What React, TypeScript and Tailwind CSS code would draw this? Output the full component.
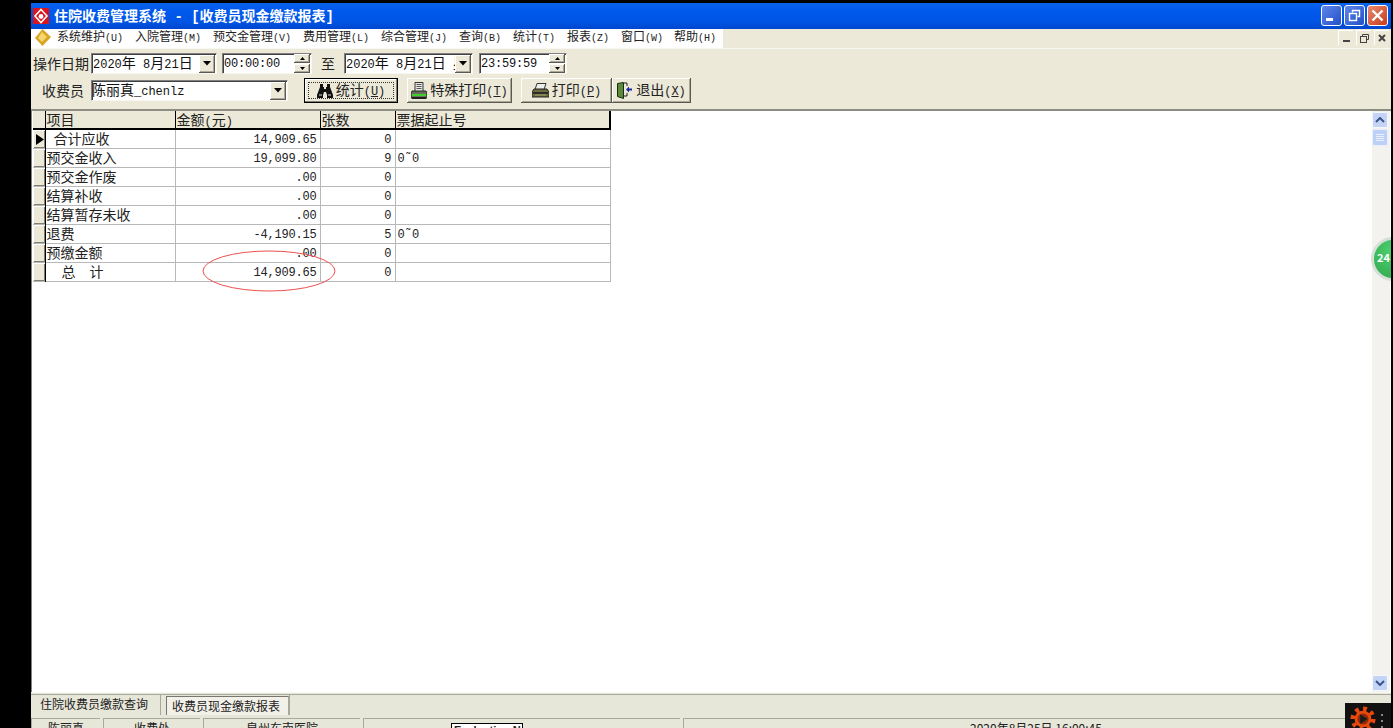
const FONT = "font-['Noto_Sans_CJK_SC','Liberation_Sans',sans-serif]";
const MONO = "font-['Liberation_Mono','Noto_Sans_CJK_SC',monospace]";

const menus = [
  ["系统维护", "(U)", "w-[78px]"],
  ["入院管理", "(M)", "w-[78px]"],
  ["预交金管理", "(V)", "w-[90px]"],
  ["费用管理", "(L)", "w-[78px]"],
  ["综合管理", "(J)", "w-[78px]"],
  ["查询", "(B)", "w-[54px]"],
  ["统计", "(T)", "w-[54px]"],
  ["报表", "(Z)", "w-[54px]"],
  ["窗口", "(W)", "w-[53px]"],
  ["帮助", "(H)", "w-[54px]"],
];

const rows = [
  { name: "合计应收", pad: "pl-[8px]", amount: "14,909.65", count: "0", range: "", mark: true },
  { name: "预交金收入", pad: "pl-[1px]", amount: "19,099.80", count: "9", range: "0˜0" },
  { name: "预交金作废", pad: "pl-[1px]", amount: ".00", count: "0", range: "" },
  { name: "结算补收", pad: "pl-[1px]", amount: ".00", count: "0", range: "" },
  { name: "结算暂存未收", pad: "pl-[1px]", amount: ".00", count: "0", range: "" },
  { name: "退费", pad: "pl-[1px]", amount: "-4,190.15", count: "5", range: "0˜0" },
  { name: "预缴金额", pad: "pl-[1px]", amount: ".00", count: "0", range: "" },
  { name: "总　计", pad: "pl-[16px]", amount: "14,909.65", count: "0", range: "" },
];

const sunken =
  "bg-white border-t border-l border-t-[#808080] border-l-[#808080] border-r border-b border-r-[#f8f8f0] border-b-[#f8f8f0] shadow-[inset_1px_1px_0_#404040]";
const raised =
  "bg-[#ece9d8] shadow-[inset_-1px_-1px_0_#5a5a50,inset_1px_1px_0_#ffffff,inset_-2px_-2px_0_#aca899]";

const Caret = () => (
  <div className={`${raised} w-4 h-[18px] shrink-0 flex items-center justify-center`}>
    <svg width="8" height="5" viewBox="0 0 8 5">
      <path d="M0 0h8L4 4.5z" fill="#000" />
    </svg>
  </div>
);

const Spinner = () => (
  <div className="w-4 h-[19px] shrink-0 flex flex-col gap-px">
    <div className={`${raised} h-[9px] flex items-center justify-center`}>
      <svg width="5" height="3" viewBox="0 0 5 3"><path d="M2.5 0L5 3H0z" fill="#000" /></svg>
    </div>
    <div className={`${raised} h-[9px] flex items-center justify-center`}>
      <svg width="5" height="3" viewBox="0 0 5 3"><path d="M0 0h5L2.5 3z" fill="#000" /></svg>
    </div>
  </div>
);

const DateBox = ({ w, clip }: { w: string; clip?: boolean }) => (
  <div className={`${sunken} ${w} h-[21px] flex items-center pl-px pr-px overflow-hidden`}>
    <span className="flex-1 text-[14px] leading-[18px] whitespace-pre overflow-hidden text-[#111]">
      <span className={`${MONO} text-[12px]`}>2020</span>年<span className={`${MONO} text-[12px]`}> 8</span>月<span className={`${MONO} text-[12px]`}>21</span>日{clip ? <><span className={`${MONO} text-[12px]`}> </span>星</> : null}
    </span>
    <Caret />
  </div>
);

const TimeBox = ({ value, w }: { value: string; w: string }) => (
  <div className={`${sunken} ${w} h-[21px] flex items-center pl-px pr-px`}>
    <span className={`${MONO} flex-1 text-[12px] tracking-[-0.2px] text-[#111]`}>{value}</span>
    <Spinner />
  </div>
);

const Binoculars = () => (
  <svg width="16" height="14" viewBox="0 0 16 14">
    <path d="M3 0h3v3h1v2h2V3h1V0h3v3l3 8v3H10v-3l-1-3H7l-1 3v3H0v-3l3-8z" fill="#111" />
    <path d="M2 10h3v2H2zM11 10h3v2h-3z" fill="#777" />
  </svg>
);

const GreenPrinter = () => (
  <svg width="16" height="18" viewBox="0 0 16 18">
    <path d="M4 .5h8v9H4z" fill="#e8e8e8" stroke="#333" />
    <path d="M5.5 2.5h5M5.5 4.5h5M5.5 6.5h5" stroke="#555" />
    <path d="M1 9h14l1 2v5H0v-5z" fill="#6b6b5e" stroke="#1d2d16" />
    <path d="M1 12h14v2H1z" fill="#3fd02e" />
    <path d="M1 15h14v2H1z" fill="#222" />
  </svg>
);

const GrayPrinter = () => (
  <svg width="17" height="15" viewBox="0 0 17 15">
    <path d="M5 .5h9l-2 6H3z" fill="#eee" stroke="#333" />
    <path d="M2 6h13l2 3v5H0V9z" fill="#6d6d3c" stroke="#222" />
    <path d="M1 9h15v2H1z" fill="#2c2c2c" />
    <path d="M3 12h11" stroke="#9ca06a" />
  </svg>
);

const ExitDoor = () => (
  <svg width="16" height="17" viewBox="0 0 16 17">
    <path d="M.5 1.5l6-1v16l-6-2z" fill="#5d8a3a" stroke="#172c14" />
    <path d="M7 1h3v3M10 11v3H7" stroke="#222" fill="none" />
    <path d="M9 7.5l3-3v2h3v2h-3v2z" fill="#1d2aa0" />
  </svg>
);

const Btn = ({ w, label, hot, icon, focus }: { w: string; label: string; hot: string; icon: React.ReactNode; focus?: boolean }) => (
  <div
    className={`${w} h-[25px] shrink-0 flex items-center justify-center gap-[3px] bg-[#ece9d8] relative ${
      focus ? "border border-black shadow-[inset_-1px_-1px_0_#808070,inset_1px_1px_0_#ffffff]" : raised
    }`}
  >
    {focus && <div className="absolute inset-[3px] border border-dotted border-[#333]" />}
    {icon}
    <span className="text-[14px] leading-[18px] text-[#222] whitespace-nowrap">
      {label}
      <span className={`${MONO} text-[12px]`}>(<span className="underline">{hot}</span>)</span>
    </span>
  </div>
);

const MdiGlyph = ({ children }: { children: React.ReactNode }) => (
  <div className="w-[15px] h-[15px] flex items-center justify-center bg-[#ece9d8] border-l border-t border-[#fff]">
    {children}
  </div>
);

const CaptionBtn = ({ bg, children }: { bg: string; children: React.ReactNode }) => (
  <div className={`w-[21px] h-[21px] rounded-[3px] border border-white flex items-center justify-center ${bg}`}>
    {children}
  </div>
);

export default function App() {
  return (
    <div className={`${FONT} w-[1393px] h-[728px] bg-black overflow-hidden pt-[3px] pl-[31px] pr-[2px]`}>
      <div className="relative w-[1360px] h-[725px] overflow-hidden flex flex-col bg-[#ece9d8]">
        {/* title bar */}
        <div className="h-[26px] shrink-0 flex items-center pl-[2px] pr-[3px] bg-[linear-gradient(180deg,#0a63ea_0%,#0058ee_30%,#0055e5_70%,#0047cf_100%)]">
          <svg width="16" height="16" viewBox="0 0 16 16" className="shrink-0">
            <rect width="16" height="16" fill="#d8141c" />
            <path d="M8 1.5L14 8l-6 6.5L2 8z" fill="none" stroke="#fff" strokeWidth="1.6" />
            <circle cx="8" cy="8.5" r="2.4" fill="#fff" />
          </svg>
          <span className="ml-[5px] pb-px text-white font-bold text-[14px] leading-[18px] whitespace-pre">
            住院收费管理系统<span className={MONO}> - [</span>收费员现金缴款报表<span className={MONO}>]</span>
          </span>
          <div className="ml-auto pb-[2px] flex gap-[2px]">
            <CaptionBtn bg="bg-[linear-gradient(135deg,#5f86ea,#2350c8)]">
              <div className="w-[7px] h-[3px] bg-white mt-[9px] mr-[4px]" />
            </CaptionBtn>
            <CaptionBtn bg="bg-[linear-gradient(135deg,#5f86ea,#2350c8)]">
              <svg width="13" height="13" viewBox="0 0 13 13" fill="none" stroke="#fff">
                <path d="M4.5 3.5v-2h7v6h-2" strokeWidth="1.4" />
                <rect x="1.5" y="4.5" width="7" height="7" strokeWidth="1.4" />
              </svg>
            </CaptionBtn>
            <CaptionBtn bg="bg-[linear-gradient(135deg,#eb8a6f,#c8391c)]">
              <svg width="13" height="13" viewBox="0 0 13 13">
                <path d="M1.5 1.5l10 10M11.5 1.5l-10 10" stroke="#fff" strokeWidth="2.4" />
              </svg>
            </CaptionBtn>
          </div>
        </div>

        {/* menu bar */}
        <div className="h-[20px] shrink-0 flex items-center bg-[#ece9d8] border-b border-[#f8f8f2]">
          <div className="w-[692px] h-full bg-white flex items-center pb-[3px]">
            <svg width="17" height="17" viewBox="0 0 17 17" className="ml-[3px] mr-[6px] shrink-0">
              <path d="M8.5 0L17 8l-8.5 9L1 9z" fill="#d9a520" />
              <path d="M8 3l5 5-5 5-4-4z" fill="#f5d66e" />
            </svg>
            {menus.map(([name, key, w]) => (
              <span key={name} className={`${w} text-[12px] leading-[16px] text-[#222] whitespace-nowrap shrink-0`}>
                {name}
                <span className={`${MONO} text-[10px]`}>{key}</span>
              </span>
            ))}
          </div>
          <div className="ml-auto mr-[2px] pb-[2px] flex gap-[3px]">
            <MdiGlyph>
              <div className="w-[7px] h-[2px] bg-[#444] mt-[5px]" />
            </MdiGlyph>
            <MdiGlyph>
              <svg width="9" height="9" viewBox="0 0 9 9" fill="none" stroke="#444">
                <path d="M2.5 2V.5h6v5H7" />
                <rect x=".5" y="2.5" width="6" height="6" />
              </svg>
            </MdiGlyph>
            <MdiGlyph>
              <svg width="8" height="8" viewBox="0 0 8 8">
                <path d="M1 1l6 6M7 1L1 7" stroke="#444" strokeWidth="2" />
              </svg>
            </MdiGlyph>
          </div>
        </div>

        {/* filters */}
        <div className="h-[62px] shrink-0 flex flex-col text-[#222] border-b-2 border-[#8d8d84]">
          <div className="h-[21px] mt-[4px] flex items-center pl-[2px]">
            <span className="w-[58px] text-[14px] whitespace-nowrap">操作日期</span>
            <DateBox w="w-[126px]" />
            <div className="w-[5px]" />
            <TimeBox value="00:00:00" w="w-[90px]" />
            <span className="w-[32px] text-center text-[14px]">至</span>
            <DateBox w="w-[129px]" clip />
            <div className="w-[6px]" />
            <TimeBox value="23:59:59" w="w-[88px]" />
          </div>
          <div className="h-[25px] mt-[4px] flex items-center">
            <span className="ml-[11px] w-[49px] text-[14px] whitespace-nowrap">收费员</span>
            <div className={`${sunken} w-[197px] h-[21px] flex items-center pr-px`}>
              <span className="flex-1 text-[14px] leading-[18px] whitespace-nowrap text-[#111]">
                陈丽真<span className={`${MONO} text-[12px]`}>_chenlz</span>
              </span>
              <Caret />
            </div>
            <div className="w-[16px]" />
            <Btn w="w-[94px]" label="统计" hot="U" focus icon={<Binoculars />} />
            <div className="w-[9px]" />
            <Btn w="w-[105px]" label="特殊打印" hot="T" icon={<GreenPrinter />} />
            <div className="w-[9px]" />
            <Btn w="w-[91px]" label="打印" hot="P" icon={<GrayPrinter />} />
            <Btn w="w-[79px]" label="退出" hot="X" icon={<ExitDoor />} />
          </div>
        </div>

        {/* grid area */}
        <div className="flex-1 min-h-0 bg-white flex border-l border-[#808080] relative">
          <div className="flex-1 pl-px">
            <table className="border-collapse table-fixed w-[577px] text-[14px] text-[#222]">
              <colgroup>
                <col className="w-[12px]" />
                <col className="w-[130px]" />
                <col className="w-[145px]" />
                <col className="w-[75px]" />
                <col className="w-[215px]" />
              </colgroup>
              <thead>
                <tr className="bg-[#ece9d8] border-b-2 border-black">
                  <th className="p-0 border-r border-black" />
                  {["项目", "金额(元)", "张数", "票据起止号"].map((h, i) => (
                    <th key={h} className={`p-0 pl-px font-normal text-left ${i === 3 ? "border-r-2" : "border-r"} border-black`}>
                      <div className="h-[17px] leading-[16px] whitespace-nowrap">
                        {h === "金额(元)" ? (
                          <>
                            金额<span className={`${MONO} text-[12px]`}>(</span>元<span className={`${MONO} text-[12px]`}>)</span>
                          </>
                        ) : (
                          h
                        )}
                      </div>
                    </th>
                  ))}
                </tr>
              </thead>
              <tbody>
                {rows.map((r) => (
                  <tr key={r.name} className="h-[19px] border-b border-[#b8b8b8]">
                    <td className="p-0 bg-[#ece9d8] border-r border-black shadow-[inset_1px_1px_0_#fff,inset_-1px_-1px_0_#808070]">
                      {r.mark && (
                        <svg width="8" height="11" viewBox="0 0 8 11" className="ml-[3px]">
                          <path d="M0 0l8 5.5L0 11z" fill="#000" />
                        </svg>
                      )}
                    </td>
                    <td className={`p-0 pb-[2px] ${r.pad} leading-[16px] whitespace-pre border-r border-[#b8b8b8]`}>{r.name}</td>
                    <td className={`${MONO} p-0 pt-px pr-[3px] text-right text-[12px] leading-[16px] tracking-[-0.2px] border-r border-[#b8b8b8]`}>{r.amount}</td>
                    <td className={`${MONO} p-0 pt-px pr-[3px] text-right text-[12px] leading-[16px] border-r border-[#b8b8b8]`}>{r.count}</td>
                    <td className={`${MONO} p-0 pt-px pl-[2px] text-[12px] leading-[16px] border-r border-[#b8b8b8]`}>{r.range}</td>
                  </tr>
                ))}
              </tbody>
            </table>
          </div>

          {/* scrollbar */}
          <div className="w-[18px] mr-px flex flex-col bg-[#f3f2ee]">
            <div className="h-[16px] w-[16px] mt-px rounded-[2px] bg-[#c3d4f6] border border-[#f4f7fd] flex items-center justify-center">
              <svg width="10" height="6" viewBox="0 0 10 6" fill="none" stroke="#3c5688" strokeWidth="2">
                <path d="M1 5l4-4 4 4" />
              </svg>
            </div>
            <div className="h-[17px] w-[16px] mt-px rounded-[2px] bg-[#bdd0f8] border border-[#e8eefb] flex flex-col items-center justify-center gap-px">
              <div className="w-[8px] h-px bg-[#eaf0fd]" />
              <div className="w-[8px] h-px bg-[#eaf0fd]" />
              <div className="w-[8px] h-px bg-[#eaf0fd]" />
              <div className="w-[8px] h-px bg-[#eaf0fd]" />
            </div>
            <div className="mt-auto h-[16px] w-[16px] mb-px rounded-[2px] bg-[#c3d4f6] border border-[#f4f7fd] flex items-center justify-center">
              <svg width="10" height="6" viewBox="0 0 10 6" fill="none" stroke="#3c5688" strokeWidth="2">
                <path d="M1 1l4 4 4-4" />
              </svg>
            </div>
          </div>
        </div>

        {/* MDI tabs */}
        <div className="h-[23px] shrink-0 border-t border-[#f8f8f2] bg-[#e7e7d9]">
          <div className="border-t border-[#a9a99b] mt-px h-[21px] flex items-start">
            <div className="w-[130px] h-[20px] pl-[9px] pb-[2px] flex items-center text-[12px] text-[#222] whitespace-nowrap border-r border-[#a9a99b]">
              住院收费员缴款查询
            </div>
            <div className="ml-[5px] mt-px w-[123px] h-[19px] pl-[5px] pb-px flex items-center text-[12px] text-[#222] whitespace-nowrap bg-[#f2f1e9] border-t border-l border-[#77776d] border-r border-r-[#a9a99b]">
              收费员现金缴款报表
            </div>
            <div className="w-[1px] h-[20px] bg-[#a9a99b]" />
          </div>
        </div>

        {/* status bar */}
        <div className="h-[13px] shrink-0 pt-[3px] bg-[#e7e7d9] flex gap-[3px] text-[12px] leading-[14px] text-[#222] whitespace-nowrap overflow-hidden">
          <div className="w-[69px] h-[20px] pt-[2px] text-center border-t border-l border-[#a9a99b]">陈丽真</div>
          <div className="w-[97px] h-[20px] pt-[2px] text-center border-t border-l border-[#a9a99b]">收费处</div>
          <div className="w-[157px] h-[20px] pt-[2px] text-center border-t border-l border-[#a9a99b]">泉州东南医院</div>
          <div className="w-[317px] h-[20px] pl-[87px] border-t border-l border-[#a9a99b]">
            <div className="w-[72px] h-[20px] mt-[4px] bg-white border border-black pl-[2px] font-bold text-[11px] leading-[12px] overflow-hidden font-['Liberation_Sans',sans-serif]">
              Evaluation Note
            </div>
          </div>
          <div className="flex-1 h-[20px] pt-[2px] pl-[286px] border-t border-l border-[#a9a99b]">2020年8月25日 16:00:45</div>
        </div>

        {/* annotation ellipse */}
        <svg width="136" height="44" viewBox="0 0 136 44" className="absolute left-[171px] top-[247px]">
          <ellipse cx="67" cy="21" rx="66" ry="20" fill="none" stroke="#ef4f4f" />
        </svg>

        {/* floating green badge */}
        <div className="absolute left-[1340px] top-[234px] w-[44px] h-[44px] rounded-full bg-[radial-gradient(circle_at_50%_30%,#4fd06e,#2fa84e)] border-[3px] border-[#d5dfd5] flex items-center pl-[3px] pb-[3px] text-[11px] font-bold text-white">
          24
        </div>

        {/* recorder logo */}
        <div className="absolute left-[1314px] top-[700px] w-[46px] h-[25px] bg-[#111] overflow-hidden">
          <svg width="26" height="26" viewBox="0 0 28 28" className="ml-[5px] mt-[3px]">
            <circle cx="14" cy="14" r="11" fill="none" stroke="#e8480c" strokeWidth="5" strokeDasharray="4 4.6" />
            <circle cx="14" cy="14" r="9" fill="#e8480c" />
            <circle cx="14" cy="14" r="6" fill="#8a2a08" />
            <path d="M11 9l8 5-8 5z" fill="#1a1a1a" />
          </svg>
          <div className="absolute left-[36px] top-[11px] flex flex-col gap-[4px]">
            <div className="w-[2px] h-[2px] bg-[#888]" />
            <div className="w-[2px] h-[2px] bg-[#888]" />
            <div className="w-[2px] h-[2px] bg-[#888]" />
          </div>
        </div>
      </div>
    </div>
  );
}
